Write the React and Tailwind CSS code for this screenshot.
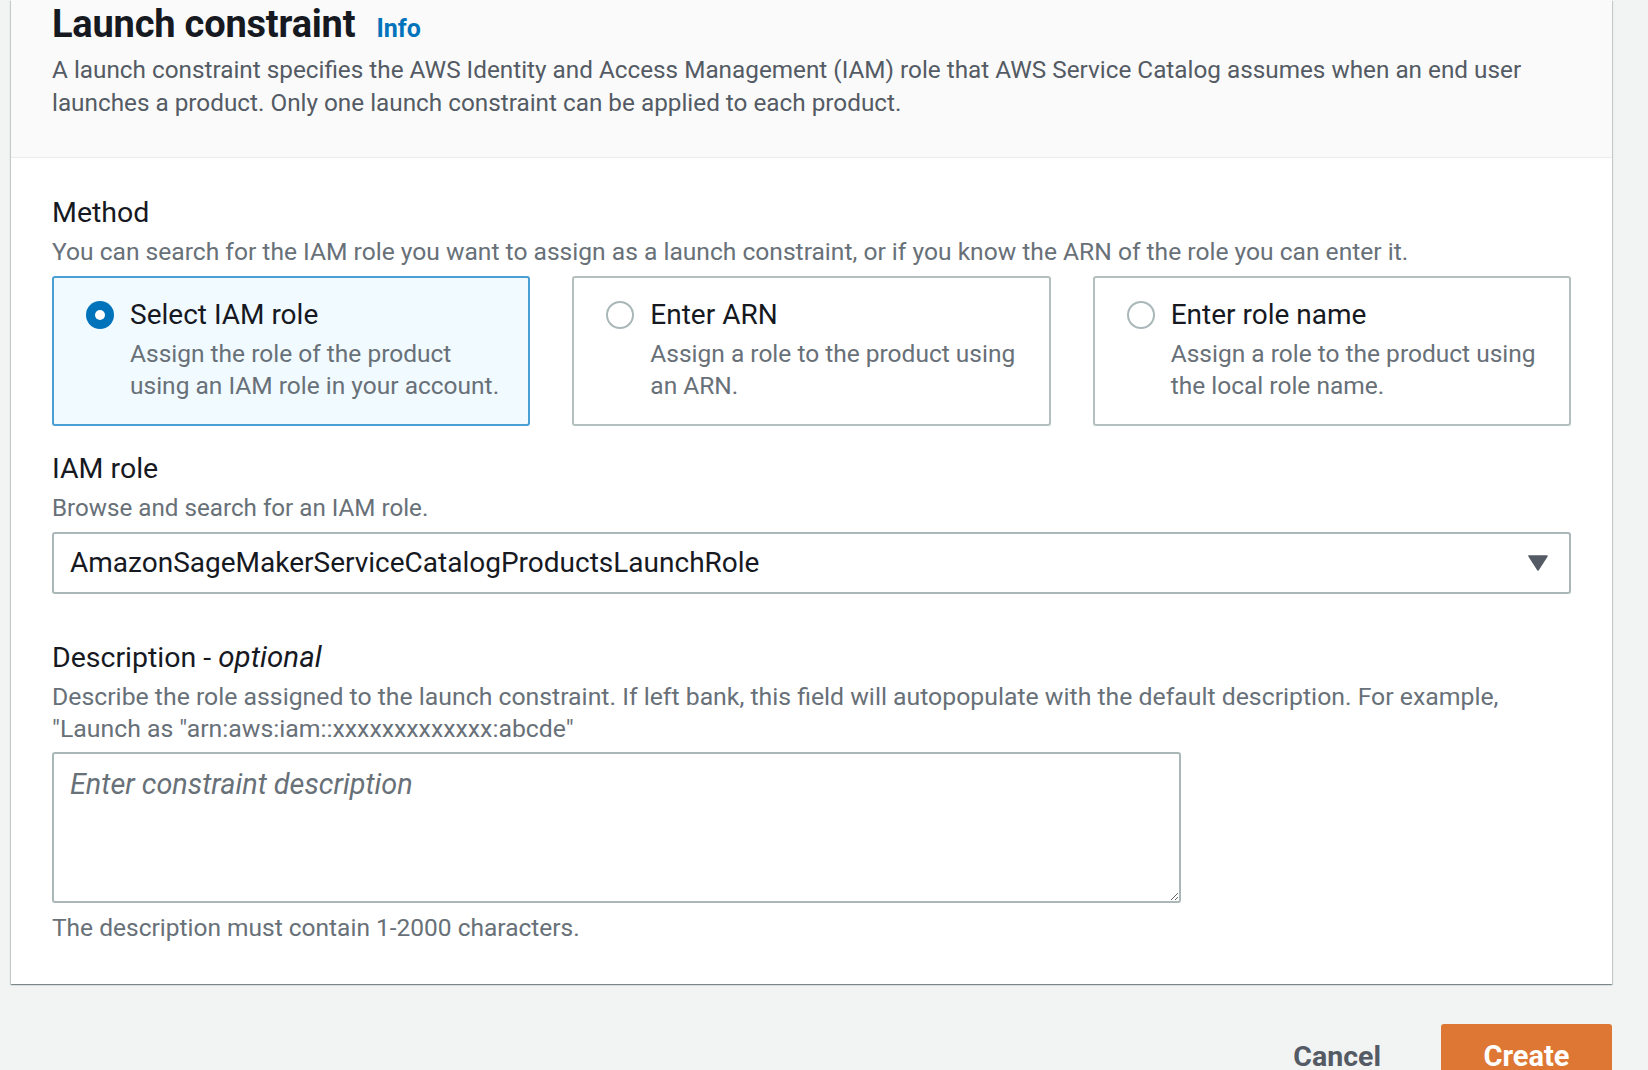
import React from "react";

const tiles = [
  {
    title: "Select IAM role",
    desc: "Assign the role of the product using an IAM role in your account.",
    selected: true,
  },
  {
    title: "Enter ARN",
    desc: "Assign a role to the product using an ARN.",
    selected: false,
  },
  {
    title: "Enter role name",
    desc: "Assign a role to the product using the local role name.",
    selected: false,
  },
];

const Radio = ({ checked }) =>
  checked ? (
    <span className="mt-[4px] shrink-0 w-[28px] h-[28px] rounded-full bg-[#0073bb] flex items-center justify-center">
      <span className="w-[10px] h-[10px] rounded-full bg-white" />
    </span>
  ) : (
    <span className="mt-[4px] shrink-0 w-[28px] h-[28px] rounded-full border-2 border-[#aab7b8] bg-white" />
  );

export default function App() {
  return (
    <div className="h-[1070px] overflow-hidden bg-[#f2f3f3] pl-[11px] pr-[36px] font-['Roboto',sans-serif] text-[#16191f]">
      {/* Container */}
      <div className="bg-white shadow-[0_1px_1px_0_rgba(0,28,36,0.3),1px_1px_1px_0_rgba(0,28,36,0.15),-1px_1px_1px_0_rgba(0,28,36,0.15)]">
        {/* Header */}
        <div className="bg-[#fafafa] border-b border-[#eaeded] px-[41px] pt-[1px] pb-[38px]">
          <div className="flex items-baseline h-[46px]">
            <h2 className="text-[38px] leading-[46px] font-bold tracking-[-0.2px]">Launch constraint</h2>
            <a className="ml-[21px] text-[25px] font-bold text-[#0073bb]">Info</a>
          </div>
          <p className="mt-[6px] text-[24.3px] leading-[33px] text-[#545b64]">
            A launch constraint specifies the AWS Identity and Access Management (IAM) role that AWS Service Catalog assumes when an end user
            launches a product. Only one launch constraint can be applied to each product.
          </p>
        </div>

        {/* Body */}
        <div className="px-[41px] pt-[37px] pb-[40px]">
          <div className="text-[28.5px] leading-[36px]">Method</div>
          <div className="mt-[5px] text-[24.6px] leading-[32px] text-[#687078]">
            You can search for the IAM role you want to assign as a launch constraint, or if you know the ARN of the role you can enter it.
          </div>

          <div className="mt-[8px] grid grid-cols-3 gap-[42px]">
            {tiles.map((t) => (
              <div
                key={t.title}
                className={
                  t.selected
                    ? "h-[150px] rounded-[3px] border-2 border-[#4a9fd4] bg-[#f1faff] pl-[32px] pr-[20px] pt-[19px] flex gap-[16px]"
                    : "h-[150px] rounded-[3px] border-2 border-[#b4bfc0] bg-white pl-[32px] pr-[20px] pt-[19px] flex gap-[16px]"
                }
              >
                <Radio checked={t.selected} />
                <div>
                  <div className="text-[28px] leading-[36px]">{t.title}</div>
                  <div className="mt-[5px] text-[24.5px] leading-[32px] text-[#687078]">{t.desc}</div>
                </div>
              </div>
            ))}
          </div>

          <div className="mt-[25px] text-[28.5px] leading-[36px]">IAM role</div>
          <div className="mt-[5px] text-[24.2px] leading-[32px] text-[#687078]">Browse and search for an IAM role.</div>
          <div className="mt-[8px] h-[62px] rounded-[3px] border-2 border-[#aab7b8] bg-white pl-[16px] pr-[21px] flex items-center justify-between">
            <span className="text-[28px]">AmazonSageMakerServiceCatalogProductsLaunchRole</span>
            <svg width="20" height="16" viewBox="0 0 20 16" className="text-[#545b64]">
              <path d="M1 1 H19 L10 15 Z" fill="currentColor" stroke="currentColor" strokeWidth="1.5" strokeLinejoin="round" />
            </svg>
          </div>

          <div className="mt-[45px] text-[28.5px] leading-[36px]">
            Description - <i className="text-[29.5px]">optional</i>
          </div>
          <div className="mt-[5px] text-[24.8px] leading-[32px] text-[#687078]">
            Describe the role assigned to the launch constraint. If left bank, this field will autopopulate with the default description. For example,
            <br />
            "Launch as "arn:aws:iam::xxxxxxxxxxxxx:abcde"
          </div>
          <textarea
            placeholder="Enter constraint description"
            className="mt-[7px] block w-[1129px] h-[151px] rounded-[3px] border-2 border-[#aab7b8] bg-white px-[16px] py-[12px] text-[28.8px] leading-[36px] placeholder:italic placeholder:text-[#687078] outline-none"
          />
          <div className="mt-[9px] text-[24.5px] leading-[32px] text-[#687078]">The description must contain 1-2000 characters.</div>
        </div>
      </div>

      {/* Actions */}
      <div className="mt-[40px] flex justify-end items-start gap-[60px]">
        <button className="mt-[16px] text-[28.5px] leading-[34px] font-bold text-[#545b64]">Cancel</button>
        <button className="h-[62px] w-[171px] rounded-[3px] bg-[#dd7733] pt-[4px] text-[29px] font-bold text-white">Create</button>
      </div>
    </div>
  );
}
